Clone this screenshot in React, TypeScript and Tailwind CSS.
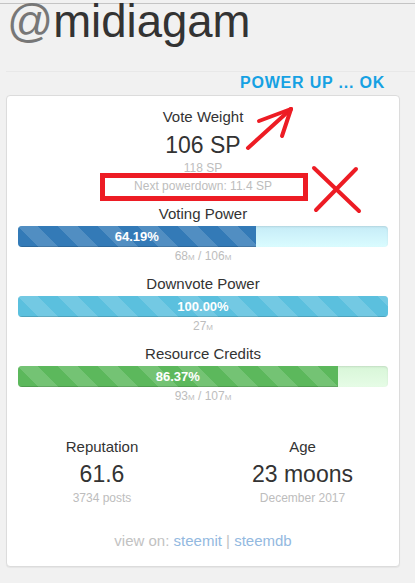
import React from 'react';

type Bar = {
  title: string;
  pct: number;
  fill: string;
  track: string;
  used: string;
  max?: string;
};

const bars: Bar[] = [
  { title: 'Voting Power', pct: 64.19, fill: 'bg-[#337ab7]', track: 'bg-[linear-gradient(to_bottom,#c6ecf7,#dafcff)]', used: '68', max: '106' },
  { title: 'Downvote Power', pct: 100, fill: 'bg-[#5bc0de]', track: 'bg-[#d6f8fd]', used: '27' },
  { title: 'Resource Credits', pct: 86.37, fill: 'bg-[#5cb85c]', track: 'bg-[linear-gradient(to_bottom,#d8f6d8,#e6fce6)]', used: '93', max: '107' },
];

const Mega: React.FC<{ n: string }> = ({ n }) => (
  <>
    {n}
    <span className="text-[8px] leading-none">M</span>
  </>
);

const Progress: React.FC<{ bar: Bar }> = ({ bar }) => (
  <div className="mt-[12px]">
    <div className="text-center text-[15px] leading-[18px] text-[#333]">{bar.title}</div>
    <div className={`mt-[3px] h-[21px] rounded-[4px] overflow-hidden flex shadow-[inset_0_1px_2px_rgba(0,0,0,0.1)] ${bar.track}`}>
      <div
        className={`h-full flex items-center justify-center text-white text-[13px] font-bold bg-[linear-gradient(45deg,rgba(255,255,255,.15)_25%,transparent_25%,transparent_50%,rgba(255,255,255,.15)_50%,rgba(255,255,255,.15)_75%,transparent_75%,transparent)] [background-size:40px_40px] shadow-[inset_0_-1px_0_rgba(0,0,0,0.15)] ${bar.fill}`}
        style={{ width: `${bar.pct}%` }}
      >
        {bar.pct.toFixed(2)}%
      </div>
    </div>
    <div className="mt-[2px] h-[14px] text-center text-[12px] leading-[14px] text-[#bdbdbd]">
      <Mega n={bar.used} />
      {bar.max && (
        <>
          {' / '}
          <Mega n={bar.max} />
        </>
      )}
    </div>
  </div>
);

const Stat: React.FC<{ label: string; value: string; sub: string }> = ({ label, value, sub }) => (
  <div className="text-center">
    <div className="text-[15px] leading-[18px] text-[#333]">{label}</div>
    <div className="mt-[4px] text-[23px] leading-[28px] text-[#333]">{value}</div>
    <div className="mt-[3px] text-[12px] leading-[14px] text-[#bdbdbd]">{sub}</div>
  </div>
);

const Annotations: React.FC = () => (
  <svg className="absolute left-0 top-0 pointer-events-none" width="415" height="583" viewBox="0 0 415 583">
    <g stroke="#ed1c24" fill="none" strokeLinecap="round" strokeLinejoin="round">
      <rect x="102.5" y="175.5" width="203" height="23" strokeWidth="5" strokeLinecap="butt" strokeLinejoin="miter" />
      <line x1="314" y1="168" x2="359" y2="211" strokeWidth="4" />
      <line x1="356" y1="169" x2="316" y2="210" strokeWidth="4" />
      <line x1="248" y1="148" x2="291" y2="109" strokeWidth="4" />
      <line x1="259" y1="121" x2="291" y2="109" strokeWidth="4" />
      <line x1="291" y1="109" x2="282" y2="136" strokeWidth="4" />
    </g>
  </svg>
);

export default function App() {
  return (
    <div className="relative w-[415px] h-[583px] bg-[#f1f1f1] font-['Liberation_Sans',Arial,sans-serif]">
      <div className="h-[3px]" />
      <div className="border-t border-[#c4c4c4]" />
      <h1 className="-mt-[4px] pl-[7px] text-[45.5px] leading-[44px] text-[#333] font-normal">
        <span className="text-[#777]">@</span>midiagam
      </h1>
      <div className="mt-[27px] ml-[6px] border-t border-[#e8e8e8]" />
      <div className="mt-[3px] pr-[30px] text-right text-[16px] leading-[16px] font-bold tracking-[0.8px] text-[#16a1e3]">
        POWER UP ... OK
      </div>
      <div className="mt-[4px] ml-[6px] w-[394px] h-[472px] bg-white border border-[#dcdcdc] rounded-[4px] shadow-[0_1px_1px_rgba(0,0,0,0.05)] px-[11px] pt-[12px]">
        <div className="text-center text-[15px] leading-[18px] text-[#333]">Vote Weight</div>
        <div className="mt-[5px] text-center text-[23px] leading-[28px] text-[#333]">106 SP</div>
        <div className="mt-[2px] text-center text-[12px] leading-[14px] text-[#bdbdbd]">118 SP</div>
        <div className="mt-[4px] text-center text-[12px] leading-[14px] text-[#bdbdbd]">Next powerdown: 11.4 SP</div>
        {bars.map((b) => (
          <Progress key={b.title} bar={b} />
        ))}
        <div className="mt-[35px] -mx-[11px] grid grid-cols-[190px_193px] gap-x-[9px]">
          <Stat label="Reputation" value="61.6" sub="3734 posts" />
          <Stat label="Age" value="23 moons" sub="December 2017" />
        </div>
        <div className="mt-[27px] text-center text-[15px] leading-[18px] text-[#c2c2c2]">
          view on: <a className="text-[#93b9df]">steemit</a> | <a className="text-[#93b9df]">steemdb</a>
        </div>
      </div>
      <Annotations />
    </div>
  );
}
